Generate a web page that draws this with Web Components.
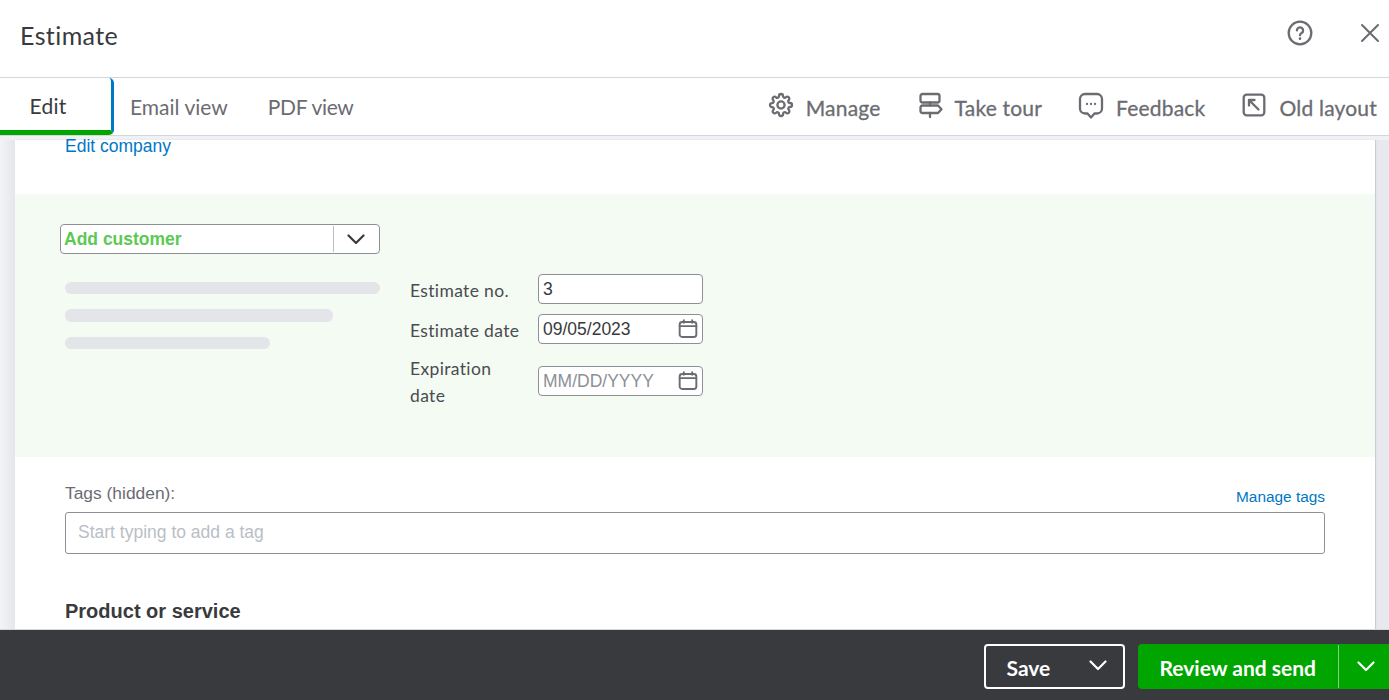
<!DOCTYPE html>
<html>
<head>
<meta charset="utf-8">
<title>Estimate</title>
<style>
  html, body { margin: 0; height: 100%; overflow: hidden; }
  body { font-family: "Lato", "Liberation Sans", sans-serif; color: #393a3d; }
</style>
</head>
<body>
<estimate-app></estimate-app>

<script>
const CHEVRON = `<svg width="18" height="11" viewBox="0 0 18 11" fill="none" stroke="currentColor" stroke-width="2.2" stroke-linecap="round" stroke-linejoin="round"><path d="M1.5 1.5L9 9l7.5-7.5"/></svg>`;

const ICONS = {
  gear: `<circle cx="12" cy="12" r="3.6"/><path d="M19.4 15a1.65 1.65 0 0 0 .33 1.82l.06.06a2 2 0 0 1 0 2.83 2 2 0 0 1-2.83 0l-.06-.06a1.65 1.65 0 0 0-1.82-.33 1.65 1.65 0 0 0-1 1.51V21a2 2 0 0 1-2 2 2 2 0 0 1-2-2v-.09A1.65 1.65 0 0 0 9 19.4a1.65 1.65 0 0 0-1.82.33l-.06.06a2 2 0 0 1-2.83 0 2 2 0 0 1 0-2.83l.06-.06a1.65 1.65 0 0 0 .33-1.82 1.65 1.65 0 0 0-1.51-1H3a2 2 0 0 1-2-2 2 2 0 0 1 2-2h.09A1.65 1.65 0 0 0 4.6 9a1.65 1.65 0 0 0-.33-1.82l-.06-.06a2 2 0 0 1 0-2.83 2 2 0 0 1 2.83 0l.06.06a1.65 1.65 0 0 0 1.82.33H9a1.65 1.65 0 0 0 1-1.51V3a2 2 0 0 1 2-2 2 2 0 0 1 2 2v.09a1.65 1.65 0 0 0 1 1.51 1.65 1.65 0 0 0 1.82-.33l.06-.06a2 2 0 0 1 2.83 0 2 2 0 0 1 0 2.83l-.06.06a1.65 1.65 0 0 0-.33 1.82V9a1.65 1.65 0 0 0 1.51 1H21a2 2 0 0 1 2 2 2 2 0 0 1-2 2h-.09a1.65 1.65 0 0 0-1.51 1z"/>`,
  tour: `<rect x="2.5" y="1" width="19" height="8.5" rx="2"/><path d="M4.5 12.5h15.500l3.500 3.700-3.500 3.800H4.500a2 2 0 0 1-2-2v-3.500a2 2 0 0 1 2-2z"/><path d="M12 9.500v3M12 20v4"/>`,
  chat: `<path d="M6 1h12a5 5 0 0 1 5 5v9.500a5 5 0 0 1-5 5h-2.500L12 24.500l-3.500-4H6a5 5 0 0 1-5-5V6a5 5 0 0 1 5-5z"/><path d="M8 11h.01M12 11h.01M16 11h.01" stroke-linecap="round"/>`,
  back: `<rect x="1.700" y="1.700" width="20.600" height="20.600" rx="3"/><path d="M7 12.500V7h5.500M7 7l9.500 9.500"/>`,
  calendar: `<rect x="2" y="3.500" width="20" height="18" rx="3"/><path d="M2 8.500h20M7 1.500v3M17 1.500v3"/>`
};

// svg icon, picked by name
class UiIcon extends HTMLElement {
  connectedCallback() {
    const size = this.getAttribute("size") || 24;
    const shadow = this.shadowRoot || this.attachShadow({ mode: "open" });
    shadow.innerHTML = `
      <style>
        :host { display: inline-flex; color: #6b6c72; }
        svg { display: block; overflow: visible; }
      </style>
      <svg width="${size}" height="${size}" viewBox="0 0 24 24" fill="none" stroke="currentColor" stroke-width="2.300" stroke-linejoin="round" stroke-linecap="round">${ICONS[this.getAttribute("name")]}</svg>`;
  }
}
customElements.define("ui-icon", UiIcon);

class EstimateHeader extends HTMLElement {
  constructor() {
    super();
    this.attachShadow({ mode: "open" }).innerHTML = `
      <style>
        :host { display: flex; align-items: center; height: 77px; padding: 0 8px 0 20px; background: #fff; border-bottom: 1px solid #d4d7dc; }
        h1 { flex: 1; margin: 0 0 8px; font-size: 25px; letter-spacing: .4px; font-weight: 400; color: #393a3d; }
        .help { display: flex; margin: 0 46px 11px 0; color: #6b6c72; }
        .close { display: flex; margin-bottom: 11px; color: #6b6c72; }
      </style>
      <h1><slot></slot></h1>
      <span class="help">
        <svg width="26" height="26" viewBox="0 0 26 26" fill="none" stroke="currentColor" stroke-width="2.300"><circle cx="13" cy="13" r="11.300"/><path d="M9.900 10.400a3.100 3.100 0 1 1 4.700 2.700c-1 .6-1.600 1.100-1.600 2.200" stroke-linecap="round"/><path d="M13 18.600v.1" stroke-width="2.600" stroke-linecap="round"/></svg>
      </span>
      <span class="close">
        <svg width="22" height="22" viewBox="0 0 22 22" fill="none" stroke="currentColor" stroke-width="2" stroke-linecap="round"><path d="M3 3l16 16M19 3L3 19"/></svg>
      </span>`;
  }
}
customElements.define("estimate-header", EstimateHeader);

class EstimateTabs extends HTMLElement {
  constructor() {
    super();
    this.attachShadow({ mode: "open" }).innerHTML = `
      <style>
        :host { display: flex; align-items: stretch; height: 57px; background: #fff; border-bottom: 1px solid #d4d7dc; font-size: 21px; color: #6b6c72; }
        .active { display: flex; align-items: center; justify-content: center; box-sizing: border-box; width: 114px; padding: 3px 15px 0 0; margin-right: 16px; color: #393a3d; border-right: 3px solid #0077c5; border-bottom: 5px solid #00a500; border-radius: 0 5px 5px 0; letter-spacing: .3px; }
        .tab { display: flex; align-items: center; margin-right: 40px; padding-bottom: 1px; }
        .tab.pdf { letter-spacing: -.3px; }
        .spacer { flex: 1; }
        .tools { display: flex; align-items: center; gap: 37px; padding-right: 12px; -webkit-text-stroke: .3px #6b6c72; letter-spacing: .2px; }
      </style>
      <div class="active">Edit</div>
      <div class="tab">Email view</div>
      <div class="tab pdf">PDF view</div>
      <div class="spacer"></div>
      <div class="tools"><slot></slot></div>`;
  }
}
customElements.define("estimate-tabs", EstimateTabs);

class ToolLink extends HTMLElement {
  constructor() {
    super();
    this.attachShadow({ mode: "open" }).innerHTML = `
      <style>
        :host { display: inline-flex; align-items: center; gap: 13px; }
        .icon { display: flex; margin-bottom: 3px; }
        .text { padding-top: 1px; }
      </style>
      <span class="icon"><slot name="icon"></slot></span><span class="text"><slot></slot></span>`;
  }
}
customElements.define("tool-link", ToolLink);

class EstimateSheet extends HTMLElement {
  constructor() {
    super();
    this.attachShadow({ mode: "open" }).innerHTML = `
      <style>
        :host { display: block; flex: 1; min-height: 0; overflow: hidden; padding: 4px 14px 0 15px;
          background: linear-gradient(#f0f1f5 4px, transparent 4px), linear-gradient(to right, #f3f4f7 0, #e4e6ea 15px, #e8e9ee 15px); }
        .card { background: #fff; height: 100%; box-shadow: 1px 0 1px #c9ccd2; font-family: "Liberation Sans", Arial, sans-serif; }
        .edit { display: block; height: 54px; padding-left: 50px; font-size: 17.500px; line-height: 12px; color: #0077c5; }
      </style>
      <div class="card">
        <a class="edit">Edit company</a>
        <slot></slot>
      </div>`;
  }
}
customElements.define("estimate-sheet", EstimateSheet);

class CustomerBand extends HTMLElement {
  constructor() {
    super();
    this.attachShadow({ mode: "open" }).innerHTML = `
      <style>
        :host { display: block; box-sizing: border-box; height: 263px; padding: 30px 0 0 45px; background: #f4fbf3; }
        .select { display: flex; box-sizing: border-box; width: 320px; height: 30px; background: #fff; border: 1px solid #8d9096; border-radius: 4px; }
        .select b { flex: 1; padding-left: 3px; font-size: 17.500px; line-height: 28px; color: #5cc953; }
        .arrow { display: flex; align-items: center; justify-content: center; box-sizing: border-box; width: 46px; padding-right: 2px; margin: 1px 0; border-left: 1px solid #babec5; color: #393a3d; }
        .cols { display: flex; margin-top: 20px; }
        .bars { display: flex; flex-direction: column; width: 350px; padding: 8px 0 0 5px; box-sizing: border-box; }
        .bars i { display: block; height: 12px; margin-bottom: 15px; border-radius: 6px; background: #e3e5e8; }
      </style>
      <div class="select"><b>Add customer</b><span class="arrow">${CHEVRON}</span></div>
      <div class="cols">
        <div class="bars">
          <i style="width:315px"></i>
          <i style="width:268px;height:13px"></i>
          <i style="width:205px"></i>
        </div>
        <div class="fields"><slot></slot></div>
      </div>`;
  }
}
customElements.define("customer-band", CustomerBand);

class DateField extends HTMLElement {
  constructor() {
    super();
    const calendar = this.hasAttribute("calendar") ? `<ui-icon name="calendar" size="20"></ui-icon>` : "";
    const placeholder = this.hasAttribute("placeholder");
    this.attachShadow({ mode: "open" }).innerHTML = `
      <style>
        :host { display: grid; grid-template-columns: 128px 165px; align-items: center; margin-bottom: 10px; }
        .label { box-sizing: border-box; padding: 1px 10px 0 0; margin-bottom: -1px; font-family: "Lato", "Liberation Sans", sans-serif; font-size: 17.500px; line-height: 27px; letter-spacing: .35px; color: #4a4b50; }
        .box { display: flex; align-items: center; justify-content: space-between; box-sizing: border-box; height: 30px; padding: 0 4px; background: #fff; border: 1px solid #8d9096; border-radius: 4px; font-size: 17.500px; color: ${placeholder ? "#8d9096" : "#393a3d"}; }
      </style>
      <div class="label">${this.getAttribute("label")}</div>
      <div class="box"><span>${this.getAttribute("value")}</span>${calendar}</div>`;
  }
}
customElements.define("date-field", DateField);

class TagsField extends HTMLElement {
  constructor() {
    super();
    this.attachShadow({ mode: "open" }).innerHTML = `
      <style>
        :host { display: block; padding: 26px 50px 0; }
        .top { display: flex; justify-content: space-between; align-items: flex-end; height: 29px; }
        .top span { font-size: 17.400px; line-height: 20px; color: #6b6c72; margin-bottom: 9px; }
        .top a { font-size: 15.400px; line-height: 16px; color: #0077c5; margin-bottom: 7px; }
        .box { box-sizing: border-box; height: 42px; padding-left: 12px; border: 1px solid #8d9096; border-radius: 3px; font-size: 17.500px; line-height: 39px; color: #babec5; }
      </style>
      <div class="top"><span>Tags (hidden):</span><a>Manage tags</a></div>
      <div class="box">Start typing to add a tag</div>`;
  }
}
customElements.define("tags-field", TagsField);

class SectionTitle extends HTMLElement {
  constructor() {
    super();
    this.attachShadow({ mode: "open" }).innerHTML = `
      <style>
        :host { display: block; padding: 45px 50px 0; font-size: 20px; line-height: 24px; font-weight: 700; color: #393a3d; }
      </style>
      <slot></slot>`;
  }
}
customElements.define("section-title", SectionTitle);

class EstimateFooter extends HTMLElement {
  constructor() {
    super();
    this.attachShadow({ mode: "open" }).innerHTML = `
      <style>
        :host { display: flex; justify-content: flex-end; align-items: center; gap: 13px; box-sizing: border-box; height: 71px; padding-top: 3px; background: #393a3d; font-size: 21px; font-weight: 700; color: #fff; border-top: 1px solid #d4d7dc; }
        .save { display: flex; align-items: center; justify-content: space-between; box-sizing: border-box; width: 141px; height: 45px; padding: 0 16px 0 21px; border: 2px solid #fff; border-radius: 4px; }
        .save span { padding-top: 2px; }
        .save svg { margin-bottom: 3px; }
        .send { display: flex; align-items: center; height: 45px; background: #00a500; border-radius: 4px 0 0 4px; }
        .send span { padding: 2px 22px 0 22px; }
        .more { display: flex; align-items: center; justify-content: center; box-sizing: border-box; width: 51px; height: 43px; padding-left: 4px; border-left: 1px solid #7fd27f; }
      </style>
      <div class="save"><span>Save</span>${CHEVRON}</div>
      <div class="send"><span>Review and send</span><div class="more">${CHEVRON}</div></div>`;
  }
}
customElements.define("estimate-footer", EstimateFooter);

class EstimateApp extends HTMLElement {
  constructor() {
    super();
    this.attachShadow({ mode: "open" }).innerHTML = `
      <style>
        :host { display: flex; flex-direction: column; height: 100vh; background: #fff; }
      </style>
      <estimate-header>Estimate</estimate-header>
      <estimate-tabs>
        <tool-link><ui-icon slot="icon" name="gear"></ui-icon>Manage</tool-link>
        <tool-link><ui-icon slot="icon" name="tour"></ui-icon>Take tour</tool-link>
        <tool-link><ui-icon slot="icon" name="chat"></ui-icon>Feedback</tool-link>
        <tool-link><ui-icon slot="icon" name="back"></ui-icon>Old layout</tool-link>
      </estimate-tabs>
      <estimate-sheet>
        <customer-band>
          <date-field label="Estimate no." value="3"></date-field>
          <date-field label="Estimate date" value="09/05/2023" calendar></date-field>
          <date-field label="Expiration date" value="MM/DD/YYYY" calendar placeholder></date-field>
        </customer-band>
        <tags-field></tags-field>
        <section-title>Product or service</section-title>
      </estimate-sheet>
      <estimate-footer></estimate-footer>`;
  }
}
customElements.define("estimate-app", EstimateApp);
</script>
</body>
</html>
